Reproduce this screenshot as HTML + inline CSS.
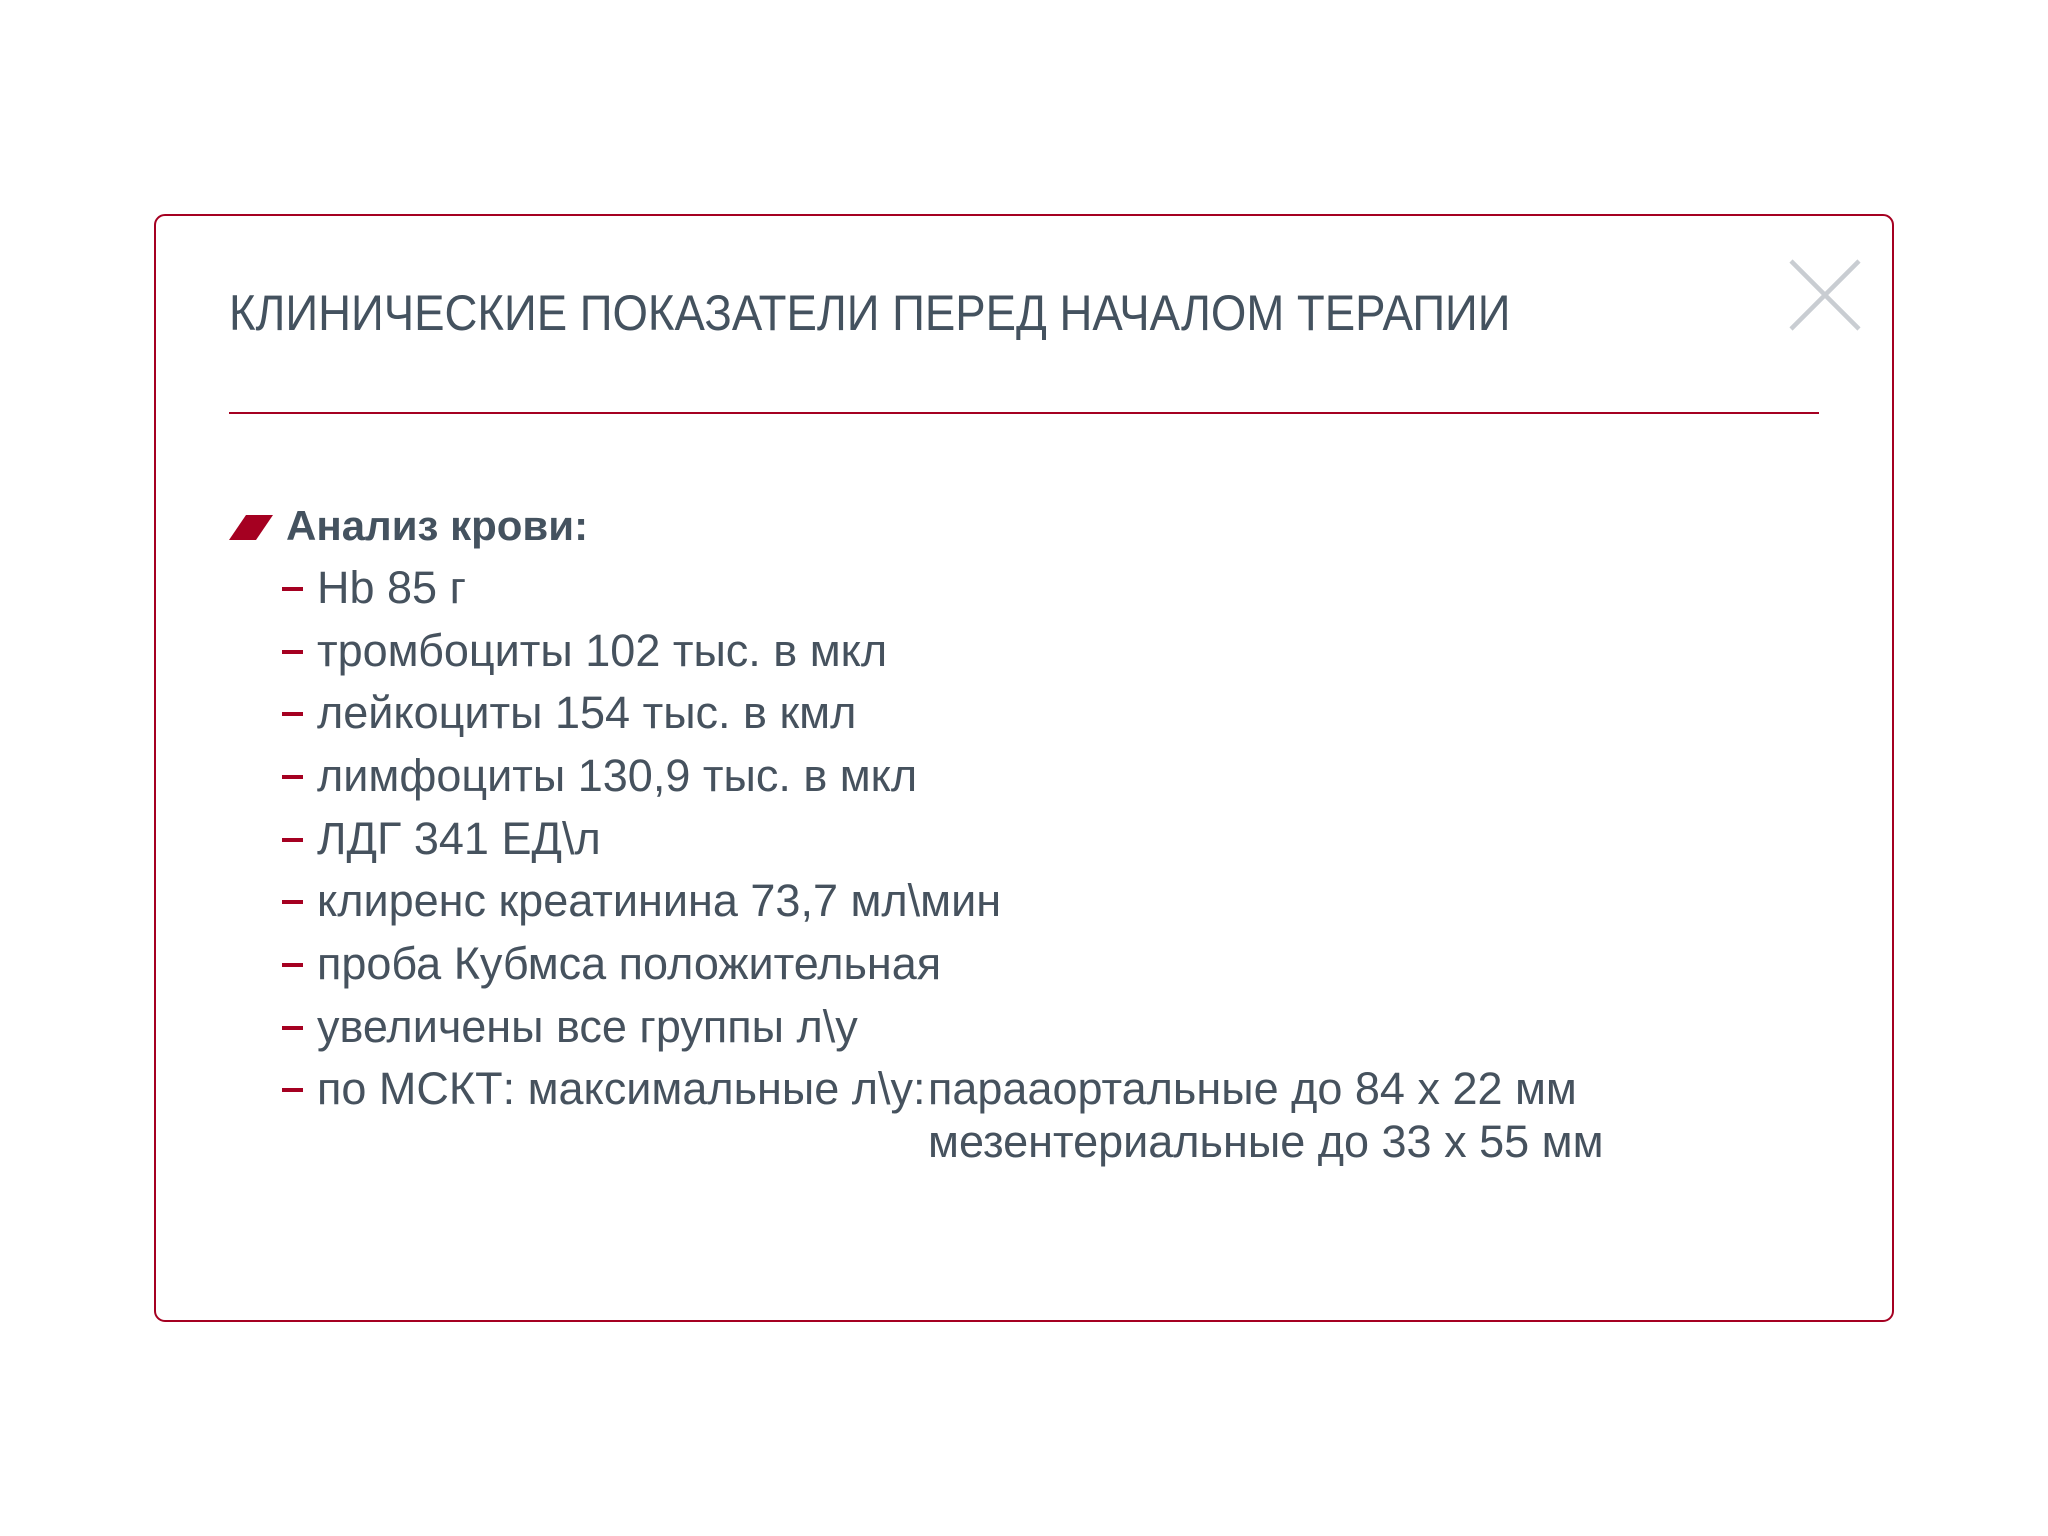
<!DOCTYPE html>
<html><head><meta charset="utf-8"><style>
html,body{margin:0;padding:0;background:#fff;width:2048px;height:1536px;overflow:hidden}
body{font-family:"Liberation Sans",sans-serif;color:#46525e;position:relative}
.box{position:absolute;left:154px;top:214px;width:1736px;height:1104px;border:2px solid #a50021;border-radius:11px}
.title{position:absolute;left:229px;top:288px;font-size:50px;line-height:1;white-space:nowrap;transform-origin:left top;transform:scaleX(0.911);color:#44525f}
.rule{position:absolute;left:229px;top:412px;width:1590px;height:2px;background:#a50021}
.head{position:absolute;left:286px;top:505px;font-size:42px;font-weight:bold;line-height:1;color:#44525f}
.mk{position:absolute;left:229px;top:515px}
.it{position:absolute;left:317px;font-size:45px;line-height:1;white-space:nowrap}
.d{position:absolute;left:282px;width:21px;height:4px;background:#a50021}
</style></head><body>
<div class="box"></div>
<div class="title">КЛИНИЧЕСКИЕ ПОКАЗАТЕЛИ ПЕРЕД НАЧАЛОМ ТЕРАПИИ</div>
<svg style="position:absolute;left:1789px;top:259px" width="72" height="72"><path d="M2 2L70 70M70 2L2 70" stroke="#c9cdd2" stroke-width="4.5"/></svg>
<div class="rule"></div>
<svg class="mk" width="44" height="25"><polygon points="17,0 44,0 27,25 0,25" fill="#a50021"/></svg>
<div class="head">Анализ крови:</div>

<div class="d" style="top:587px"></div><div class="it" style="top:565px">Hb 85 г</div>
<div class="d" style="top:650px"></div><div class="it" style="top:628px">тромбоциты 102 тыс. в мкл</div>
<div class="d" style="top:712px"></div><div class="it" style="top:690px">лейкоциты 154 тыс. в кмл</div>
<div class="d" style="top:775px"></div><div class="it" style="top:753px">лимфоциты 130,9 тыс. в мкл</div>
<div class="d" style="top:838px"></div><div class="it" style="top:816px">ЛДГ 341 ЕД\л</div>
<div class="d" style="top:900px"></div><div class="it" style="top:878px">клиренс креатинина 73,7 мл\мин</div>
<div class="d" style="top:963px"></div><div class="it" style="top:941px">проба Кубмса положительная</div>
<div class="d" style="top:1026px"></div><div class="it" style="top:1004px">увеличены все группы л\у</div>
<div class="d" style="top:1088px"></div><div class="it" style="top:1066px">по МСКТ: максимальные л\у:</div>
<div class="it" style="left:928px;top:1066px">парааортальные до 84 х 22 мм</div>
<div class="it" style="left:928px;top:1119px">мезентериальные до 33 х 55 мм</div>
</body></html>
